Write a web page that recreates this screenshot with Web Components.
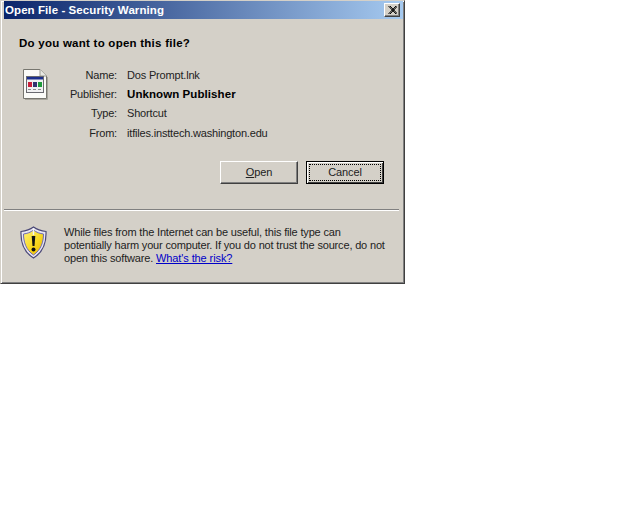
<!DOCTYPE html>
<html lang="en">
<head>
<meta charset="UTF-8" />
<title>Open File - Security Warning</title>
<style>
  html, body { margin: 0; padding: 0; background: #fff; }
  body { font: 11px "Liberation Sans", Arial, sans-serif; color: #000; }
</style>
</head>
<body>
<template id="tpl-window">
  <style>
    :host {
      display: flex; flex-direction: column; box-sizing: border-box;
      width: 405px; height: 284px; background: #d4d0c8;
      border: 1px solid; border-color: #d4d0c8 #404040 #404040 #d4d0c8;
      box-shadow: inset 1px 1px 0 #fff, inset -1px -1px 0 #808080;
      padding: 0 3px 3px 3px;
    }
    .title {
      height: 18px; flex: none; display: flex; align-items: center; justify-content: space-between;
      margin-right: -2px; padding: 0 3px 0 1px; color: #fff; font-weight: bold; font-size: 11.5px; letter-spacing: .08px;
      background: linear-gradient(90deg, #0a246a, #a6caf0);
    }
    .body { flex: 1; display: flex; flex-direction: column; min-height: 0; }
  </style>
  <div class="title"><span id="t"></span><slot name="controls"></slot></div>
  <div class="body"><slot></slot></div>
</template>

<template id="tpl-close">
  <style>
    :host {
      display: block; box-sizing: border-box; width: 16px; height: 14px; background: #d4d0c8;
      border: 1px solid; border-color: #fff #404040 #404040 #fff; box-shadow: inset -1px -1px 0 #808080;
    }
    svg { display: block; margin: 2px 0 0 3px; }
  </style>
  <svg width="9" height="8" viewBox="0 0 9 8"><path d="M0.5 0 L8 8 M2 0 L9.5 8 M8 0 L0.5 8 M9.5 0 L2 8" stroke="#000" stroke-width="1" fill="none"/></svg>
</template>

<template id="tpl-row">
  <style>
    :host { display: grid; grid-template-columns: 98px 1fr; column-gap: 10px; height: 19.3px; align-items: center; color: #222; font-size: 11px; letter-spacing: -.18px; }
    .k { text-align: right; }
    :host([strong]) .v { font-weight: bold; color: #000; font-size: 11.5px; letter-spacing: .08px; }
  </style>
  <div class="k" id="k"></div>
  <div class="v"><slot></slot></div>
</template>

<template id="tpl-button">
  <style>
    :host {
      display: flex; box-sizing: border-box; width: 78px; height: 23px; align-items: center; justify-content: center;
      background: #d4d0c8; color: #222; font-size: 11px; letter-spacing: -.1px;
      border: 1px solid; border-color: #fff #404040 #404040 #fff; box-shadow: inset -1px -1px 0 #808080;
    }
    :host([default]) { border-color: #000; box-shadow: inset 1px 1px 0 #fff, inset -1px -1px 0 #404040; }
    .f { display: flex; align-items: center; justify-content: center; align-self: stretch; flex: 1; padding-bottom: 2px; box-sizing: border-box; }
    :host([default]) .f { outline: 1px dotted #000; outline-offset: -3px; }
  </style>
  <div class="f"><slot></slot></div>
</template>

<template id="tpl-file-icon">
  <style>:host { display: block; width: 26px; height: 32px; } svg { display: block; }</style>
  <svg width="26" height="32" viewBox="0 0 26 32">
    <path d="M1.5 1.5 H18 L24.5 8 V30.5 H1.5 Z" fill="#fbfbf8" stroke="#77766f"/>
    <path d="M18 1.5 V8 H24.5" fill="#e8e8e2" stroke="#9a9a92"/>
    <path d="M25.5 9 V31.5 H3" fill="none" stroke="#a8a59c"/>
    <rect x="4.5" y="8.5" width="17" height="16" fill="#f1f1f2" stroke="#6a6a70"/>
    <rect x="5" y="9" width="16" height="2.5" fill="#1c2f8c"/>
    <rect x="6" y="14" width="4" height="5" fill="#c8203a"/>
    <rect x="11" y="14" width="4" height="5" fill="#33336e"/>
    <rect x="16" y="14" width="4" height="5" fill="#1f9a3c"/>
    <path d="M6 21.5 h14" stroke="#8a8a8a" stroke-dasharray="3 2"/>
  </svg>
</template>

<template id="tpl-shield-icon">
  <style>:host { display: block; width: 28px; height: 33px; } svg { display: block; }</style>
  <svg width="28" height="33" viewBox="0.5 0 28 33">
    <defs>
      <linearGradient id="y" x1="0" y1="0" x2="1" y2="1"><stop offset="0" stop-color="#fff27a"/><stop offset=".55" stop-color="#f8d820"/><stop offset="1" stop-color="#e8b400"/></linearGradient>
    </defs>
    <path d="M14 1 C10 4 6 5 1.5 5.5 C1 17 4 26 14 32 C24 26 27 17 26.5 5.5 C22 5 18 4 14 1 Z" fill="#e8e6f2" stroke="#4c4a78" stroke-width="1.2"/>
    <path d="M14 4 C11 6.5 7.5 7.5 4 8 C4 16 6.5 24 14 29 C21.5 24 24 16 24 8 C20.5 7.5 17 6.5 14 4 Z" fill="url(#y)" stroke="#6d69b8" stroke-width="1"/>
    <path d="M14 2 V9" stroke="#f4f4f8" stroke-width="1.4"/>
    <path d="M12.2 10 H15.8 L15 20 H13 Z" fill="#111"/>
    <circle cx="14" cy="23.5" r="2" fill="#111"/>
  </svg>
</template>

<security-window heading="Open File - Security Warning">
  <close-box slot="controls"></close-box>
  <prompt-panel></prompt-panel>
  <notice-panel></notice-panel>
</security-window>

<template id="tpl-prompt">
  <style>
    :host { display: block; height: 190px; box-sizing: border-box; padding: 16px 0 0 15px; }
    h1 { margin: 0; font-size: 11.5px; font-weight: bold; line-height: 16px; color: #000; letter-spacing: .25px; }
    .main { display: flex; margin-top: 14px; }
    file-icon { margin: 3px 0 0 3px; }
    .rows { margin-left: -29px; width: 360px; }
    .btns { display: flex; justify-content: flex-end; gap: 8px; margin: 19px 17px 0 0; }
  </style>
  <h1>Do you want to open this file?</h1>
  <div class="main">
    <file-icon></file-icon>
    <div class="rows">
      <meta-row label="Name:">Dos Prompt.lnk</meta-row>
      <meta-row label="Publisher:" strong>Unknown Publisher</meta-row>
      <meta-row label="Type:">Shortcut</meta-row>
      <meta-row label="From:">itfiles.insttech.washington.edu</meta-row>
    </div>
  </div>
  <div class="btns">
    <win-button><span><u>O</u>pen</span></win-button>
    <win-button default>Cancel</win-button>
  </div>
</template>

<template id="tpl-notice">
  <style>
    :host { display: flex; flex: 1; box-sizing: border-box; border-top: 1px solid #808080; box-shadow: inset 0 1px 0 #fff; margin: 0 2px 0 0; padding: 16px 0 0 16px; color: #222; }
    p { margin: 0 0 0 16px; font-size: 11px; line-height: 13px; letter-spacing: -.17px; white-space: nowrap; }
    a { color: #0000c8; text-decoration: underline; letter-spacing: -.1px; }
  </style>
  <shield-icon></shield-icon>
  <p>While files from the Internet can be useful, this file type can<br>potentially harm your computer. If you do not trust the source, do not<br>open this software. <a href="#">What's the risk?</a></p>
</template>

<script>
  function shadow(el, id) {
    const root = el.attachShadow({ mode: 'open' });
    root.appendChild(document.getElementById(id).content.cloneNode(true));
    return root;
  }

  class SecurityWindow extends HTMLElement {
    constructor() {
      super();
      const root = shadow(this, 'tpl-window');
      root.getElementById('t').textContent = this.getAttribute('heading');
    }
  }
  class MetaRow extends HTMLElement {
    constructor() {
      super();
      const root = shadow(this, 'tpl-row');
      root.getElementById('k').textContent = this.getAttribute('label');
    }
  }
  const simple = { 'close-box': 'tpl-close', 'win-button': 'tpl-button', 'file-icon': 'tpl-file-icon',
    'shield-icon': 'tpl-shield-icon', 'prompt-panel': 'tpl-prompt', 'notice-panel': 'tpl-notice' };

  customElements.define('meta-row', MetaRow);
  for (const name in simple) {
    customElements.define(name, class extends HTMLElement {
      constructor() {
        super();
        shadow(this, simple[name]);
      }
    });
  }
  customElements.define('security-window', SecurityWindow);
</script>
</body>
</html>
